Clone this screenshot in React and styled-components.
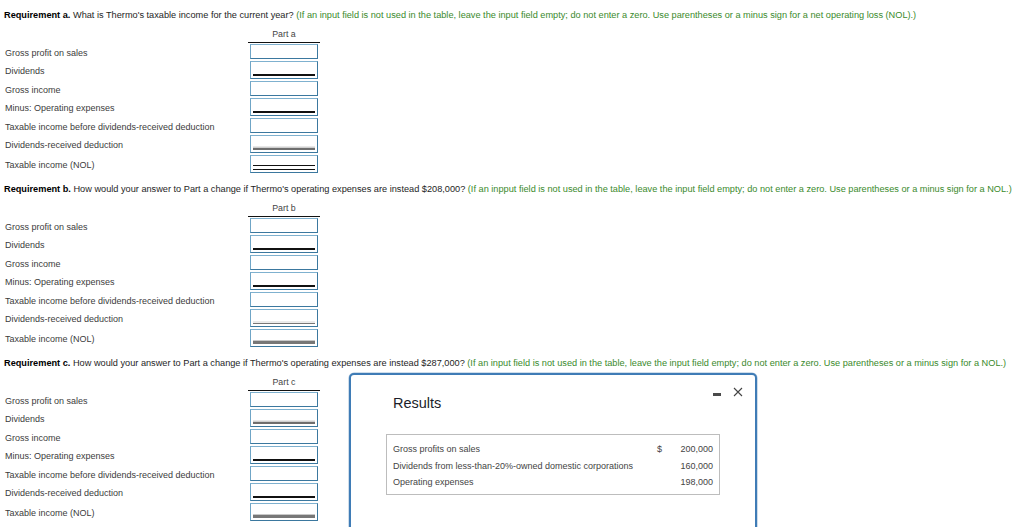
import React from "react";
import styled, { createGlobalStyle, css } from "styled-components";

const Global = createGlobalStyle`
  html, body { margin: 0; padding: 0; background: #fff; overflow: hidden; }
  body { font-family: "Liberation Sans", Arial, sans-serif; color: #222; }
`;

const Page = styled.div`
  position: relative;
  width: 1024px;
  height: 527px;
  overflow: hidden;
  padding: 0 0 0 4px;
  box-sizing: border-box;
`;

const Section = styled.section`
  padding-top: ${(p) => (p.$first ? 9 : 8)}px;
`;

const Prompt = styled.p`
  margin: 0;
  font-size: 9.2px;
  line-height: 12px;
  color: #1e1e1e;
  white-space: nowrap;
`;

const Strong = styled.b`
  font-weight: bold;
  color: #000;
`;

const Hint = styled.span`
  color: #3a8a2c;
`;

const Grid = styled.div`
  display: grid;
  grid-template-columns: 244px 72px;
`;

const HeaderCell = styled.div`
  grid-column: 2;
  height: 21.5px;
  display: flex;
  align-items: flex-end;
  justify-content: center;
  padding-bottom: 3px;
  box-sizing: border-box;
  border-bottom: 1.5px solid #111;
  font-size: 8.8px;
  color: #444;
  margin-bottom: 1.5px;
`;

const Label = styled.div`
  grid-column: 1;
  height: ${(p) => (p.$tall ? 20 : 17)}px;
  display: flex;
  align-items: center;
  padding-left: 1px;
  font-size: 9px;
  color: #3c3c3c;
  white-space: nowrap;
`;

const Cell = styled.div`
  grid-column: 2;
  height: ${(p) => (p.$tall ? 20 : 17)}px;
  padding-left: 2px;
`;

const Box = styled.div`
  position: relative;
  width: 68px;
  height: ${(p) => (p.$tall ? 18 : 15)}px;
  box-sizing: border-box;
  border: 1.5px solid #3b789f;
  border-top-color: #7fb1cf;
  border-left-color: #6fa5c6;
  background: #fff;
`;

const ruleStyles = {
  single: css`
    height: 1.4px;
    background: #111;
  `,
  double: css`
    height: 4.5px;
    border-top: 1.3px solid #111;
    border-bottom: 1.3px solid #111;
    box-sizing: border-box;
  `,
  gray: css`
    height: 2px;
    background: #6e6e6e;
    box-shadow: 0 -1.5px 0 #cfcfcf;
  `,
  thin: css`
    height: 1px;
    background: #777;
    box-shadow: 0 -1.5px 0 #d8d8d8;
  `,
  thick: css`
    height: 3px;
    background: #777;
    box-shadow: 0 -1px 0 #c8c8c8;
  `,
};

const Rule = styled.div`
  position: absolute;
  left: 2px;
  right: 2px;
  bottom: 2.5px;
  ${(p) => ruleStyles[p.$kind]}
`;

const LABELS = [
  "Gross profit on sales",
  "Dividends",
  "Gross income",
  "Minus: Operating expenses",
  "Taxable income before dividends-received deduction",
  "Dividends-received deduction",
  "Taxable income (NOL)",
];

const SECTIONS = [
  {
    letter: "a",
    question: "What is Thermo's taxable income for the current year?",
    hint:
      "(If an input field is not used in the table, leave the input field empty; do not enter a zero. Use parentheses or a minus sign for a net operating loss (NOL).)",
    rules: [null, "single", null, "single", null, "gray", "double"],
  },
  {
    letter: "b",
    question:
      "How would your answer to Part a change if Thermo's operating expenses are instead $208,000?",
    hint:
      "(If an inpput field is not used in the table, leave the input field empty; do not enter a zero. Use parentheses or a minus sign for a NOL.)",
    rules: [null, "single", null, "single", null, "thin", "thick"],
  },
  {
    letter: "c",
    question:
      "How would your answer to Part a change if Thermo's operating expenses are instead $287,000?",
    hint:
      "(If an input field is not used in the table, leave the input field empty; do not enter a zero. Use parentheses or a minus sign for a NOL.)",
    rules: [null, "gray", null, "single", null, "single", "thick"],
  },
];

const Dialog = styled.div`
  position: absolute;
  left: 349px;
  top: 373px;
  width: 408px;
  height: 200px;
  box-sizing: border-box;
  border: 2px solid #3f7cb6;
  border-radius: 5px;
  background: #fff;
  box-shadow: 0 0 0 0.5px #9dbbd8;
  padding: 19px 35px 0 42px;
`;

const DialogTitle = styled.h2`
  margin: 0;
  font-size: 14.5px;
  line-height: 18px;
  font-weight: normal;
  color: #1b1d2a;
`;

const Controls = styled.div`
  position: absolute;
  top: 12px;
  right: 12px;
  display: flex;
  align-items: center;
  gap: 12px;
`;

const MinBar = styled.div`
  width: 8px;
  height: 2.5px;
  background: #4a4a4a;
  margin-top: 5px;
`;

const DataBox = styled.div`
  margin: 22px 0 0 -7px;
  width: 334px;
  border: 1px solid #bdbdbd;
  padding: 6px 6px 3px;
  box-sizing: border-box;
`;

const DataRow = styled.div`
  display: grid;
  grid-template-columns: 1fr 12px 44px;
  line-height: 16.5px;
  font-size: 9px;
  color: #444;
`;

const Num = styled.span`
  text-align: right;
`;

const RESULTS = [
  ["Gross profits on sales", "$", "200,000"],
  ["Dividends from less-than-20%-owned domestic corporations", "", "160,000"],
  ["Operating expenses", "", "198,000"],
];

export default function App() {
  return (
    <>
      <Global />
      <Page>
        {SECTIONS.map((s, idx) => (
          <Section key={s.letter} $first={idx === 0}>
            <Prompt>
              <Strong>Requirement {s.letter}.</Strong> {s.question} <Hint>{s.hint}</Hint>
            </Prompt>
            <Grid>
              <HeaderCell>Part {s.letter}</HeaderCell>
              {LABELS.map((label, i) => {
                const kind = s.rules[i];
                const tall = !!kind;
                return (
                  <React.Fragment key={label}>
                    <Label $tall={tall}>{label}</Label>
                    <Cell $tall={tall}>
                      <Box $tall={tall}>{kind && <Rule $kind={kind} />}</Box>
                    </Cell>
                  </React.Fragment>
                );
              })}
            </Grid>
          </Section>
        ))}
        <Dialog>
          <Controls>
            <MinBar />
            <svg width="10" height="10" viewBox="0 0 10 10">
              <path d="M1 1 L9 9 M9 1 L1 9" stroke="#444" strokeWidth="1.1" fill="none" />
            </svg>
          </Controls>
          <DialogTitle>Results</DialogTitle>
          <DataBox>
            {RESULTS.map(([l, c, v]) => (
              <DataRow key={l}>
                <span>{l}</span>
                <span>{c}</span>
                <Num>{v}</Num>
              </DataRow>
            ))}
          </DataBox>
        </Dialog>
      </Page>
    </>
  );
}
